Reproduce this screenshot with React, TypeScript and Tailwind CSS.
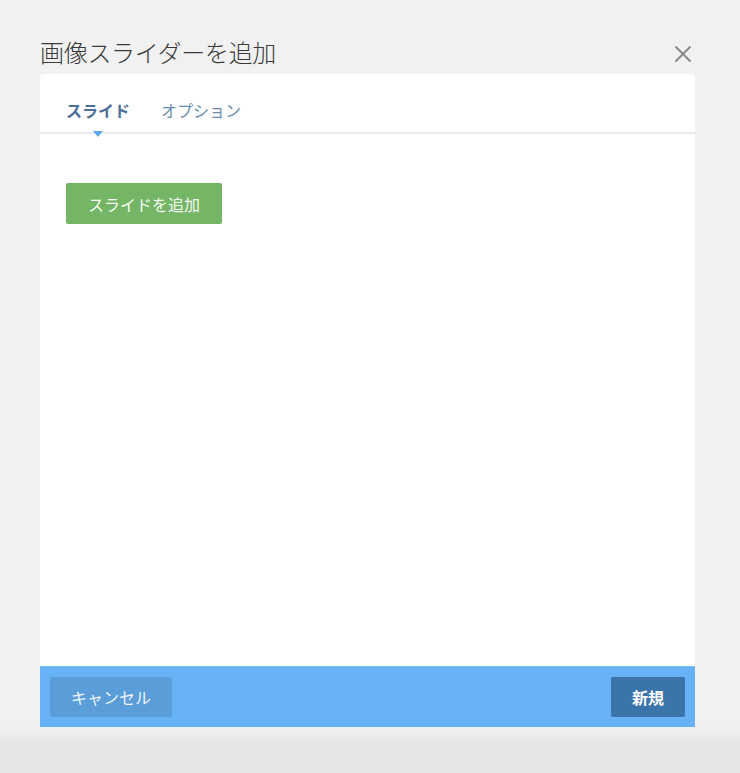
import React, { useState } from "react";

const jp = { fontFamily: '"Noto Sans CJK JP", "Noto Sans", sans-serif' };

export default function App() {
  const [tab, setTab] = useState<"slides" | "options">("slides");

  return (
    <div className="flex h-[773px] w-full flex-col bg-[#f1f1f1]" style={jp}>
      <div className="flex h-[727px] flex-col pl-[40px] pr-[45px] pt-[32px]">
        <div className="flex h-[42px] items-start justify-between">
          <h1 className="text-[24px] leading-[40px] font-light text-[#3a3a3a] tracking-[-0.3px]">
            画像スライダーを追加
          </h1>
          <button className="mt-[13px] mr-[3px] flex h-[18px] w-[18px] items-center justify-center text-[#8a8a8a]">
            <svg width="18" height="18" viewBox="0 0 18 18" fill="none">
              <path d="M1.5 1.5L16.5 16.5M16.5 1.5L1.5 16.5" stroke="currentColor" strokeWidth="2" />
            </svg>
          </button>
        </div>

        <div className="flex flex-1 flex-col overflow-hidden rounded-t-[4px] bg-white">
          <div className="flex h-[60px] items-center gap-[31px] border-b-2 border-[#ebebeb] px-[26px] pt-[14px]">
            <button
              onClick={() => setTab("slides")}
              className="relative text-[16px] font-bold text-[#4b6f97]"
            >
              スライド
              {tab === "slides" && (
                <span className="absolute left-1/2 top-[33px] h-0 w-0 -translate-x-1/2 border-x-[5px] border-t-[6px] border-x-transparent border-t-[#5aa8ee]" />
              )}
            </button>
            <button
              onClick={() => setTab("options")}
              className="relative text-[16px] font-normal text-[#6a8aae]"
            >
              オプション
              {tab === "options" && (
                <span className="absolute left-1/2 top-[33px] h-0 w-0 -translate-x-1/2 border-x-[5px] border-t-[6px] border-x-transparent border-t-[#5aa8ee]" />
              )}
            </button>
          </div>

          <div className="flex-1 px-[26px] pt-[49px]">
            {tab === "slides" && (
              <button className="h-[41px] rounded-[2px] bg-[#74b566] px-[22px] text-[16px] text-[#f4fbf2]">
                スライドを追加
              </button>
            )}
          </div>

          <div className="flex h-[61px] items-center justify-between border-t border-[#7dbdf7] bg-[#67b1f5] px-[10px]">
            <button className="h-[40px] rounded-[2px] bg-[#5b9dd9] px-[21px] text-[16px] text-[#eef5fc]">
              キャンセル
            </button>
            <button className="h-[40px] rounded-[2px] bg-[#3b74ab] px-[21px] text-[16px] font-bold text-white">
              新規
            </button>
          </div>
        </div>
      </div>
      <div className="flex-1 bg-gradient-to-b from-[#f1f1f1] to-[#e6e6e6] to-[30%]" />
    </div>
  );
}
